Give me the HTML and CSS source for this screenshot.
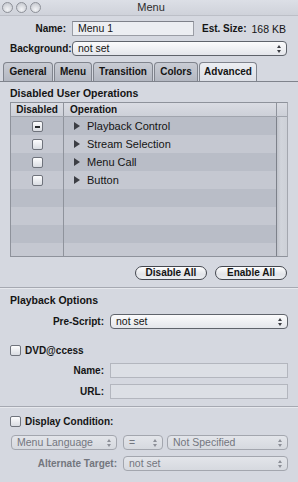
FILE: index.html
```html
<!DOCTYPE html>
<html lang="en">
<head>
    <meta charset="UTF-8">
    <title>Menu</title>
    <link rel="stylesheet" href="styles.css">
</head>
<body>
<div class="window">
    <div class="titlebar">
        <div class="lights"><span></span><span></span><span></span></div>
        <div class="title">Menu</div>
    </div>

    <div class="form-top">
        <div class="row">
            <label class="lbl lbl-top">Name:</label>
            <div class="input name-input">Menu 1</div>
            <span class="est">Est. Size:</span><span class="est-val">168 KB</span>
        </div>
        <div class="row">
            <label class="lbl lbl-top">Background:</label>
            <div class="select grow">not set<i class="arrows"></i></div>
        </div>
    </div>

    <div class="tabs">
        <div class="tab t-general">General</div>
        <div class="tab t-menu">Menu</div>
        <div class="tab t-trans">Transition</div>
        <div class="tab t-colors">Colors</div>
        <div class="tab t-adv active">Advanced</div>
    </div>

    <div class="panel">
        <div class="section-title first">Disabled User Operations</div>
        <div class="table">
            <div class="thead">
                <div class="th c1">Disabled</div>
                <div class="th c2">Operation</div>
                <div class="th c3"></div>
            </div>
            <div class="tbody">
                <div class="rows">
                    <div class="tr"><div class="c1"><span class="check mixed"></span></div><div class="c2"><span class="tri"></span>Playback Control</div></div>
                    <div class="tr"><div class="c1"><span class="check"></span></div><div class="c2"><span class="tri"></span>Stream Selection</div></div>
                    <div class="tr"><div class="c1"><span class="check"></span></div><div class="c2"><span class="tri"></span>Menu Call</div></div>
                    <div class="tr"><div class="c1"><span class="check"></span></div><div class="c2"><span class="tri"></span>Button</div></div>
                    <div class="tr"><div class="c1"></div><div class="c2"></div></div>
                    <div class="tr"><div class="c1"></div><div class="c2"></div></div>
                    <div class="tr"><div class="c1"></div><div class="c2"></div></div>
                    <div class="tr"><div class="c1"></div><div class="c2"></div></div>
                </div>
                <div class="scroller"></div>
            </div>
        </div>
        <div class="buttons">
            <button class="btn btn-dis">Disable All</button>
            <button class="btn btn-en">Enable All</button>
        </div>
    </div>

    <div class="divider"></div>

    <div class="panel">
        <div class="section-title">Playback Options</div>
        <div class="row row-pre">
            <label class="lbl lbl-mid">Pre-Script:</label>
            <div class="select grow">not set<i class="arrows"></i></div>
        </div>
        <div class="check-row dvd">
            <span class="check"></span><span class="bold">DVD@ccess</span>
        </div>
        <div class="row row-name">
            <label class="lbl lbl-mid">Name:</label>
            <div class="input disabled grow"></div>
        </div>
        <div class="row row-url">
            <label class="lbl lbl-mid">URL:</label>
            <div class="input disabled grow"></div>
        </div>
    </div>

    <div class="divider div2"></div>

    <div class="panel">
        <div class="check-row cond">
            <span class="check"></span><span class="bold">Display Condition:</span>
        </div>
        <div class="row row-cond">
            <div class="select disabled s-lang">Menu Language<i class="arrows"></i></div>
            <div class="select disabled s-eq">=<i class="arrows"></i></div>
            <div class="select disabled grow">Not Specified<i class="arrows"></i></div>
        </div>
        <div class="row row-alt">
            <label class="lbl lbl-alt">Alternate Target:</label>
            <div class="select disabled grow">not set<i class="arrows"></i></div>
        </div>
    </div>
</div>
</body>
</html>
```

FILE: styles.css
```css
html, body {
    margin: 0;
    padding: 0;
}
body {
    font-family: "Liberation Sans", Arial, sans-serif;
    font-size: 10.5px;
    color: #141414;
    background-color: #d5d8e0;
}
.window {
    width: 298px;
    height: 482px;
    overflow: hidden;
    background-color: #d5d8e0;
}

/* title bar */
.titlebar {
    position: relative;
    height: 15px;
    border-bottom: 1px solid #bcbfc7;
    background: linear-gradient(#dcdfe6, #cfd2da);
}
.title {
    text-align: center;
    line-height: 14px;
    font-size: 11px;
    color: #2c2c2c;
    padding-left: 4px;
}
.lights {
    position: absolute;
    left: 2px;
    top: 2px;
    display: flex;
    gap: 3px;
}
.lights span {
    width: 9px;
    height: 9px;
    border-radius: 50%;
    border: 1px solid #8e9199;
    background: radial-gradient(circle at 50% 70%, #f2f3f6, #bfc2c9);
}

/* generic rows */
.row {
    display: flex;
    align-items: center;
}
.grow {
    flex: 1;
}
.lbl {
    text-align: right;
    font-weight: bold;
    font-size: 10px;
    padding-right: 6px;
    box-sizing: border-box;
    white-space: nowrap;
}
.bold {
    font-weight: bold;
    font-size: 10px;
}

.form-top {
    padding: 5px 11px 0 10px;
    display: flex;
    flex-direction: column;
    gap: 5px;
}
.form-top .row {
    height: 15px;
}
.lbl-top {
    width: 62px;
}
.name-input {
    width: 122px;
}
.est {
    font-weight: bold;
    font-size: 10px;
    margin-left: 8px;
    white-space: nowrap;
}
.est-val {
    margin-left: 5px;
    white-space: nowrap;
}

.input {
    height: 15px;
    box-sizing: border-box;
    border: 1px solid #9a9da5;
    border-top-color: #7e818a;
    background-color: #eceef2;
    padding: 0 5px;
    line-height: 13px;
}
.input.disabled {
    background-color: #dcdfe5;
    border-color: #b3b6be;
}

.select {
    position: relative;
    height: 15px;
    box-sizing: border-box;
    border: 1px solid #5f636b;
    border-radius: 4px;
    background: linear-gradient(#fbfbfc, #e4e6eb);
    padding: 0 5px;
    line-height: 13px;
    white-space: nowrap;
}
.select.disabled {
    border-color: #a3a6ae;
    color: #73767e;
    background: linear-gradient(#e3e5ea, #d6d9df);
}
.arrows {
    position: absolute;
    right: 5px;
    top: 3px;
    width: 4px;
    height: 8px;
}
.arrows::before, .arrows::after {
    content: "";
    position: absolute;
    left: 0;
    border-left: 2px solid transparent;
    border-right: 2px solid transparent;
}
.arrows::before {
    top: 0;
    border-bottom: 3px solid #3a3c42;
}
.arrows::after {
    bottom: 0;
    border-top: 3px solid #3a3c42;
}
.select.disabled .arrows::before {
    border-bottom-color: #8c8f97;
}
.select.disabled .arrows::after {
    border-top-color: #8c8f97;
}

/* tabs */
.tabs {
    margin-top: 6px;
    height: 19px;
    display: flex;
    padding-left: 3px;
    border-bottom: 1px solid #7f838c;
}
.tab {
    box-sizing: border-box;
    height: 19px;
    border: 1px solid #80848d;
    border-bottom: none;
    border-radius: 4px 4px 0 0;
    background: linear-gradient(#c9ccd4, #b3b7c1);
    font-weight: bold;
    font-size: 10px;
    text-align: center;
    line-height: 18px;
    margin-right: 1px;
}
.tab.active {
    background: linear-gradient(#eceef2, #dcdfe6);
}
.t-general { width: 50px; }
.t-menu { width: 38px; }
.t-trans { width: 60px; }
.t-colors { width: 44px; }
.t-adv { width: 58px; }

.panel {
    padding: 0 10px;
}
.section-title {
    font-weight: bold;
    font-size: 10.5px;
    line-height: 13px;
    margin-top: 5px;
}
.section-title.first {
    margin-top: 5px;
}

/* table */
.table {
    margin-top: 2px;
    border: 1px solid #8e929b;
    border-right-color: #a4a7af;
}
.thead {
    display: flex;
    height: 13px;
    background: linear-gradient(#dadce3, #cdd0d8);
    border-bottom: 1px solid #a0a4ad;
}
.th {
    font-weight: bold;
    font-size: 10px;
    line-height: 13px;
}
.c1 {
    width: 53px;
    box-sizing: border-box;
    border-right: 1px solid #8f939c;
    display: flex;
    align-items: center;
    justify-content: center;
}
.c2 {
    flex: 1;
    padding-left: 6px;
    display: flex;
    align-items: center;
}
.th.c2 {
    border-right: 1px solid #8f939c;
}
.th.c3 {
    width: 10px;
}
.tbody {
    display: flex;
    height: 139px;
    overflow: hidden;
}
.rows {
    flex: 1;
    border-right: 1px solid #7d818a;
}
.tr {
    display: flex;
    height: 18px;
    background-color: #b9bdc7;
}
.tr:nth-child(even) {
    background-color: #c5c8d1;
}
.tr .c2 {
    font-size: 11px;
}
.scroller {
    width: 10px;
    background: linear-gradient(90deg, #c0c3cb, #d2d5dc 40%, #cdd0d7);
}
.tri {
    width: 0;
    height: 0;
    border-top: 4px solid transparent;
    border-bottom: 4px solid transparent;
    border-left: 6px solid #3c3e44;
    margin: 0 7px 0 4px;
}

.check {
    display: inline-block;
    width: 11px;
    height: 11px;
    box-sizing: border-box;
    border: 1px solid #6f737c;
    border-radius: 2px;
    background: linear-gradient(#fdfdfe, #d9dce2);
    position: relative;
}
.check.mixed::after {
    content: "";
    position: absolute;
    left: 2px;
    top: 4px;
    width: 5px;
    height: 2px;
    background-color: #26282c;
}

.buttons {
    display: flex;
    justify-content: flex-end;
    gap: 8px;
    margin-top: 9px;
    padding-right: 1px;
}
.btn {
    font-family: "Liberation Sans", Arial, sans-serif;
    font-size: 10px;
    font-weight: bold;
    color: #141414;
    height: 14px;
    padding: 0;
    border: 1px solid #454850;
    border-radius: 7px;
    background: linear-gradient(#ffffff, #e2e4e9 60%, #eceef2);
    line-height: 12px;
}
.btn-dis { width: 72px; }
.btn-en { width: 72px; }

.divider {
    margin-top: 7px;
    height: 1px;
    background-color: #a6a9b2;
    border-bottom: 1px solid #e6e8ed;
}
.div2 {
    margin-top: 7px;
}

.row-pre {
    margin-top: 7px;
    height: 15px;
}
.lbl-mid {
    width: 100px;
}
.check-row {
    display: flex;
    align-items: center;
    gap: 4px;
    height: 12px;
}
.dvd {
    margin-top: 15px;
}
.row-name {
    margin-top: 7px;
    height: 15px;
}
.row-url {
    margin-top: 6px;
    height: 15px;
}
.cond {
    margin-top: 7px;
}
.row-cond {
    margin-top: 8px;
    height: 15px;
    padding-left: 1px;
}
.s-lang {
    width: 106px;
    margin-right: 6px;
}
.s-eq {
    width: 40px;
    margin-right: 4px;
}
.row-alt {
    margin-top: 6px;
    height: 15px;
}
.lbl-alt {
    width: 113px;
    color: #73767e;
}
```
